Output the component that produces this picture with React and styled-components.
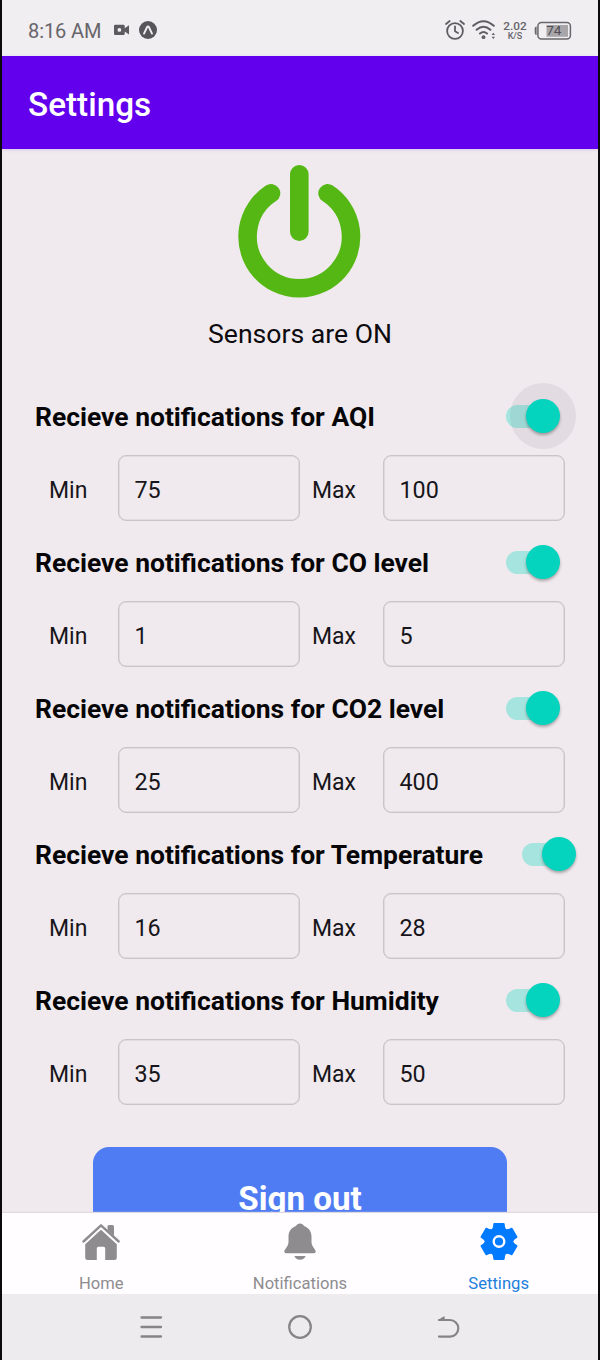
import React from "react";
import styled, { createGlobalStyle } from "styled-components";

const GlobalStyle = createGlobalStyle`
  * { box-sizing: border-box; }
  body { margin: 0; background: #f0eaee; font-family: Roboto, sans-serif; }
`;

const Phone = styled.div`
  width: 600px;
  height: 1360px;
  display: flex;
  flex-direction: column;
  overflow: hidden;
  background: #f0eaee;
  border-left: 2px solid #0b090c;
  border-right: 2px solid #0b090c;
`;

const StatusBar = styled.header`
  height: 56px;
  flex: none;
  display: flex;
  align-items: center;
  padding: 4px 26px 0 26px;
  background: #f0eef1;
  color: #67656a;
`;

const Clock = styled.span`
  font-size: 20px;
  letter-spacing: -0.1px;
  margin-right: 13px;
  padding-top: 1px;
  white-space: nowrap;
`;

const StatusIcons = styled.div`
  display: flex;
  align-items: center;
  gap: ${(p) => p.$gap}px;
  margin-left: ${(p) => (p.$end ? "auto" : "0")};
  svg { display: block; }
`;

const Speed = styled.div`
  width: 24px;
  display: flex;
  flex-direction: column;
  align-items: center;
  padding-top: 1px;
  font-size: 11.8px;
  line-height: 11px;
  font-weight: 500;
  span:last-child { font-size: 9px; line-height: 9px; }
`;

const AppBar = styled.div`
  height: 93px;
  flex: none;
  display: flex;
  align-items: center;
  padding: 4px 26px 0;
  background: #6200ed;
  color: #fff;
  font-size: 33.3px;
  font-weight: 500;
  box-shadow: 0 1px 3px rgba(98, 0, 237, 0.15);
`;

const Content = styled.main`
  flex: 1;
  min-height: 0;
  overflow: hidden;
  display: flex;
  flex-direction: column;
`;

const Power = styled.div`
  flex: none;
  height: 223px;
  padding-top: 15px;
  display: flex;
  flex-direction: column;
  align-items: center;
  svg { display: block; }
`;

const PowerLabel = styled.div`
  margin-top: 21px;
  font-size: 26.6px;
  line-height: 30px;
  color: #0d0b0e;
`;

const Group = styled.section`
  flex: none;
  height: 146px;
`;

const GroupHead = styled.div`
  height: 84px;
  display: flex;
  align-items: center;
  justify-content: space-between;
  padding: 7px ${(p) => (p.$wide ? 22.5 : 38.5)}px 3px 33px;
`;

const GroupTitle = styled.h2`
  margin: 0;
  font-size: 26.45px;
  font-weight: 700;
  color: #060507;
  white-space: nowrap;
`;

const Track = styled.div`
  width: 54px;
  height: 23px;
  display: flex;
  align-items: center;
  justify-content: flex-end;
  border-radius: 12px;
  background: linear-gradient(to right, #a6e5df 44px, transparent 44px);
`;

const Thumb = styled.div`
  width: 34px;
  height: 34px;
  flex: none;
  border-radius: 50%;
  background: #04d3bd;
  box-shadow: 0 2px 3px rgba(0, 0, 0, 0.3)${(p) => (p.$pressed ? ", 0 0 0 16px rgba(70, 50, 80, 0.08)" : "")};
`;

const Fields = styled.div`
  height: 66px;
  margin-top: -1px;
  display: flex;
  align-items: center;
  padding-left: 47px;
`;

const FieldLabel = styled.label`
  width: ${(p) => p.$width}px;
  flex: none;
  padding-top: 4px;
  font-size: 23px;
  color: #17151a;
`;

const Field = styled.div`
  width: 182px;
  height: 66px;
  flex: none;
  display: flex;
  align-items: center;
  margin-right: 12px;
  padding: 3px 15.5px 0;
  border: 1px solid #c8c4c8;
  box-shadow: inset 0 0 0 0.6px #d2ced2;
  border-radius: 8px;
  font-size: 23.3px;
  color: #17151a;
`;

const SignOut = styled.button`
  flex: none;
  width: 414px;
  height: 102px;
  margin: 45px auto 0 91px;
  padding: 0;
  border: 0;
  border-radius: 16px;
  background: #507cf3;
  color: #fff;
  font: 700 33.2px Roboto, sans-serif;
`;

const TabBar = styled.nav`
  height: 81px;
  flex: none;
  display: grid;
  grid-template-columns: repeat(3, 1fr);
  background: #fffdff;
  box-shadow: 0 -1px 1px #dfd9de;
  position: relative;
`;

const Tab = styled.div`
  display: flex;
  flex-direction: column;
  align-items: center;
  padding-top: 9px;
  color: ${(p) => (p.$active ? "#007aff" : "#8e8c8f")};
  svg { display: block; }
`;

const TabLabel = styled.span`
  margin-top: 12.5px;
  font-size: 16.6px;
  line-height: 20px;
  color: ${(p) => (p.$active ? "#1c80dc" : "#8e8c8f")};
`;

const SystemNav = styled.div`
  height: 66px;
  flex: none;
  display: flex;
  justify-content: center;
  align-items: center;
  gap: 123px;
  background: #eeebee;
  svg { display: block; }
`;

const sensors = [
  { name: "AQI", min: 75, max: 100, pressed: true },
  { name: "CO level", min: 1, max: 5 },
  { name: "CO2 level", min: 25, max: 400 },
  { name: "Temperature", min: 16, max: 28, wide: true },
  { name: "Humidity", min: 35, max: 50 },
];

const CameraIcon = () => (
  <svg width="15" height="12" viewBox="0 0 15 12">
    <path fill="#5c5a5f" fillRule="evenodd" d="M1.3.7h8.2q1.2 0 1.2 1.2v2.3L15 1.2v9.2L10.7 7.6v2.2q0 1.2-1.2 1.2H1.3Q0 11 0 9.8V1.9Q0 .7 1.3.7zM5.4 4a1.9 1.9 0 1 0 0 3.8 1.9 1.9 0 0 0 0-3.8z" />
  </svg>
);

const ExpoIcon = () => (
  <svg width="18" height="18" viewBox="0 0 18 18">
    <circle cx="9" cy="9" r="9" fill="#57555a" />
    <path d="M5 12.6L8 6.3Q9 4.5 10 6.3L13 12.6" fill="none" stroke="#f0eef1" strokeWidth="1.9" strokeLinecap="round" />
  </svg>
);

const AlarmIcon = () => (
  <svg width="20" height="20" viewBox="0 0 20 20" fill="none" stroke="#5f5d62" strokeWidth="1.8" strokeLinecap="round" strokeLinejoin="round">
    <circle cx="10" cy="11" r="7.9" />
    <path d="M10 6.5V11.2L13 13M1 4L4.7 1M19 4L15.3 1" />
  </svg>
);

const WifiIcon = () => (
  <svg width="24" height="20" viewBox="0 0 24 20" fill="none" stroke="#5f5d62" strokeWidth="2" strokeLinecap="round">
    <path d="M1.2 5.8Q11.5-3.4 21.8 5.8M4.6 9.8Q11.5 3.6 18.4 9.8M8 13.5Q11.5 10.5 15 13.5" />
    <circle cx="11.5" cy="17.2" r="1.9" fill="#5f5d62" stroke="none" />
    <path d="M19.6 15L21.3 12.8L23 15zM19.6 16.8L21.3 19L23 16.8z" fill="#5f5d62" stroke="none" />
  </svg>
);

const BatteryIcon = () => (
  <svg width="38" height="19" viewBox="0 0 38 19">
    <path d="M2.6 5.5Q.7 5.500.7 7.5V12Q.7 14 2.6 14z" fill="#6a686c" />
    <rect x="3.9" y="1.5" width="32.5" height="16.5" rx="3.5" fill="none" stroke="#69676b" strokeWidth="1.5" />
    <rect x="12.5" y="4" width="21.5" height="11.8" fill="#a9a6aa" />
    <text x="19.8" y="14.4" textAnchor="middle" fontFamily="Roboto, sans-serif" fontSize="13.5" fontWeight="400" fill="#504e53">74</text>
  </svg>
);

const PowerIcon = () => (
  <svg width="124" height="134" viewBox="238 164 124 134" fill="none" stroke="#55b713" strokeWidth="18.6" strokeLinecap="round">
    <path d="M271 193.3A51.7 51.7 0 1 0 327.6 193.3M299.3 174.3V231.7" />
  </svg>
);

const HomeIcon = () => (
  <svg width="40" height="39" viewBox="0 0 40 39" fill="currentColor">
    <path d="M26.5 4.5q0-1.5 1.5-1.5h3.5q1.5 0 1.5 1.5v9.5l-6.5-6z" />
    <path d="M2.5 19.5L20 3.3L37.7 19.5" fill="none" stroke="currentColor" strokeWidth="2.4" strokeLinecap="round" strokeLinejoin="round" />
    <path d="M20 7.8L35.8 22.3V35.5Q35.8 38 33.3 38H24.2V26.2Q24.2 24.7 22.7 24.7H17.3Q15.8 24.7 15.8 26.2V38H6.7Q4.2 38 4.2 35.5V22.3z" />
  </svg>
);

const BellIcon = () => (
  <svg width="40" height="39" viewBox="0 0 40 39" fill="currentColor">
    <path d="M20 1.5C21.9 1.5 23.3 2.6 24 4.1C28.8 5.8 31.5 9.8 31.5 14.5V20C31.5 24.5 35.7 27.3 35.7 29.6Q35.7 31.2 34 31.2H6Q4.3 31.2 4.3 29.6C4.3 27.3 8.5 24.5 8.5 20V14.5C8.5 9.8 11.2 5.8 16 4.1C16.7 2.6 18.1 1.5 20 1.5z" />
    <path d="M14.3 34H25.7Q24.3 37.7 20 37.7T14.3 34z" />
  </svg>
);

const GearIcon = () => (
  <svg width="40" height="39" viewBox="-20 -19.5 40 39" fill="currentColor" stroke="currentColor" strokeWidth="1.8" strokeLinejoin="round">
    <circle r="12.8" />
    {[0, 60, 120, 180, 240, 300].map((angle) => (
      <path key={angle} transform={`rotate(${angle})`} d="M-6.6-11.4L-5.2-14L-4.8-17.5H4.8L5.2-14L6.6-11.4z" />
    ))}
    <circle r="5.3" fill="none" stroke="#fffdff" strokeWidth="2.4" />
  </svg>
);

export default function App() {
  return (
    <>
      <GlobalStyle />
      <Phone>
        <StatusBar>
          <Clock>8:16 AM</Clock>
          <StatusIcons $gap={10}>
            <CameraIcon />
            <ExpoIcon />
          </StatusIcons>
          <StatusIcons $gap={7} $end>
            <AlarmIcon />
            <WifiIcon />
            <Speed>
              <span>2.02</span>
              <span>K/S</span>
            </Speed>
            <BatteryIcon />
          </StatusIcons>
        </StatusBar>
        <AppBar>Settings</AppBar>
        <Content>
          <Power>
            <PowerIcon />
            <PowerLabel>Sensors are ON</PowerLabel>
          </Power>
          {sensors.map((s) => (
            <Group key={s.name}>
              <GroupHead $wide={s.wide}>
                <GroupTitle>Recieve notifications for {s.name}</GroupTitle>
                <Track>
                  <Thumb $pressed={s.pressed} />
                </Track>
              </GroupHead>
              <Fields>
                <FieldLabel $width={69}>Min</FieldLabel>
                <Field>{s.min}</Field>
                <FieldLabel $width={71}>Max</FieldLabel>
                <Field>{s.max}</Field>
              </Fields>
            </Group>
          ))}
          <SignOut>Sign out</SignOut>
        </Content>
        <TabBar>
          <Tab>
            <HomeIcon />
            <TabLabel>Home</TabLabel>
          </Tab>
          <Tab>
            <BellIcon />
            <TabLabel>Notifications</TabLabel>
          </Tab>
          <Tab $active>
            <GearIcon />
            <TabLabel $active>Settings</TabLabel>
          </Tab>
        </TabBar>
        <SystemNav>
          <svg width="26" height="24" viewBox="0 0 26 24" fill="none" stroke="#868487" strokeWidth="2.3" strokeLinecap="round">
            <path d="M3.5 2.5H23M3.5 12H23M3.5 21.5H23" />
          </svg>
          <svg width="26" height="24" viewBox="0 0 26 24" fill="none" stroke="#868487" strokeWidth="2.2">
            <circle cx="13" cy="12" r="10.8" />
          </svg>
          <svg width="26" height="24" viewBox="0 0 26 24" fill="none" stroke="#868487" strokeWidth="2.2" strokeLinecap="round" strokeLinejoin="round">
            <path d="M3 5H14A8.3 8.3 0 0 1 14 21.6H3" />
            <path d="M8 2V5H3z" fill="#868487" strokeWidth="1.4" />
          </svg>
        </SystemNav>
      </Phone>
    </>
  );
}
